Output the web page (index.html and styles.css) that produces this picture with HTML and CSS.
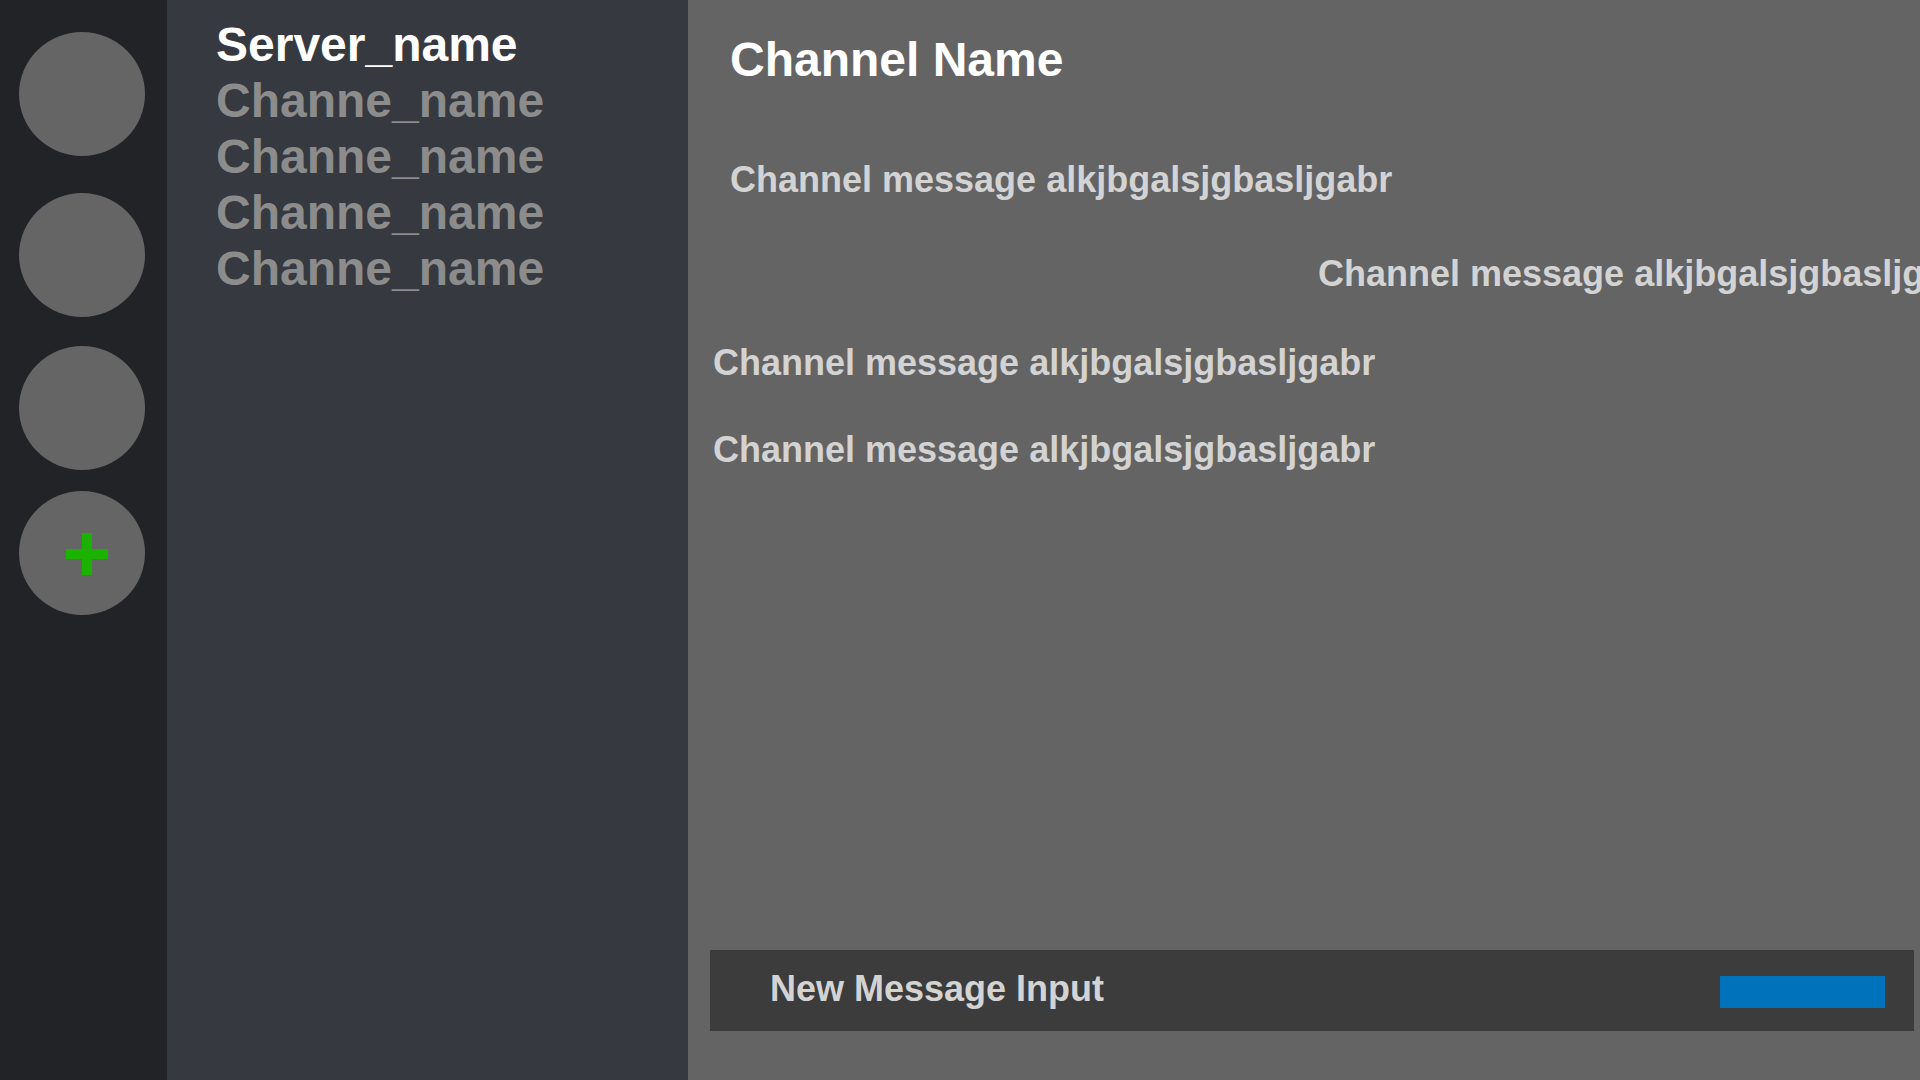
FILE: index.html
```html
<!DOCTYPE html>
<html>
<head>
<meta charset="utf-8">
<title>Chat</title>
<link rel="stylesheet" href="styles.css">
</head>
<body>
<div class="app">
  <nav class="servers">
    <div class="server-icon"></div>
    <div class="server-icon"></div>
    <div class="server-icon"></div>
    <div class="server-icon add">
      <svg class="plus" width="42" height="42" viewBox="0 0 42 42"><rect x="16" y="0" width="10" height="42" fill="#1bb300"/><rect x="0" y="16" width="42" height="10" fill="#1bb300"/></svg>
    </div>
  </nav>
  <aside class="channels">
    <div class="server-name">Server_name</div>
    <div class="channel">Channe_name</div>
    <div class="channel">Channe_name</div>
    <div class="channel">Channe_name</div>
    <div class="channel">Channe_name</div>
  </aside>
  <main class="main">
    <h1 class="channel-title">Channel Name</h1>
    <div class="messages">
      <div class="msg msg-a">Channel message alkjbgalsjgbasljgabr</div>
      <div class="msg msg-b">Channel message alkjbgalsjgbasljgabr</div>
      <div class="msg msg-c">Channel message alkjbgalsjgbasljgabr</div>
      <div class="msg msg-d">Channel message alkjbgalsjgbasljgabr</div>
    </div>
    <div class="composer">
      <span class="composer-text">New Message Input</span>
      <div class="send"></div>
    </div>
  </main>
</div>
</body>
</html>
```
FILE: styles.css
```css
html, body {
  margin: 0;
  padding: 0;
  height: 100%;
}
body {
  font-family: "Liberation Sans", Arial, sans-serif;
  font-weight: bold;
  overflow: hidden;
}
.app {
  display: flex;
  width: 1920px;
  height: 1080px;
}
.servers {
  width: 167px;
  flex: none;
  background: #212326;
  display: flex;
  flex-direction: column;
  padding-left: 19px;
  box-sizing: border-box;
}
.server-icon {
  width: 126px;
  height: 124px;
  border-radius: 50%;
  background: #656565;
  flex: none;
}
.server-icon:nth-child(1) { margin-top: 32px; }
.server-icon:nth-child(2) { margin-top: 37px; }
.server-icon:nth-child(3) { margin-top: 29px; }
.server-icon:nth-child(4) { margin-top: 21px; }
.server-icon.add {
  display: flex;
  align-items: center;
  justify-content: center;
}
.plus {
  display: block;
  margin-left: 10px;
  margin-top: 2px;
}
.channels {
  width: 521px;
  flex: none;
  background: #36393f;
  padding: 17px 0 0 49px;
  box-sizing: border-box;
  font-size: 48px;
  line-height: 56px;
}
.server-name {
  color: #ffffff;
}
.channel {
  color: #8c8c8c;
}
.main {
  flex: 1;
  background: #646464;
  display: flex;
  flex-direction: column;
  overflow: hidden;
  min-width: 0;
}
.channel-title {
  margin: 33px 0 0 42px;
  font-size: 48px;
  line-height: 54px;
  color: #ffffff;
  font-weight: bold;
}
.messages {
  flex: 1;
  display: flex;
  flex-direction: column;
  font-size: 36px;
  line-height: 40px;
  color: #d3d3d3;
  white-space: nowrap;
}
.msg-a { margin: 73px 0 0 42px; }
.msg-b { margin: 54px 0 0 630px; }
.msg-c { margin: 49px 0 0 25px; }
.msg-d { margin: 47px 0 0 25px; }
.composer {
  flex: none;
  height: 81px;
  margin: 0 6px 49px 22px;
  background: #3c3c3c;
  display: flex;
  align-items: center;
  justify-content: space-between;
  padding: 0 29px 0 60px;
  box-sizing: border-box;
}
.composer-text {
  font-size: 36px;
  line-height: 40px;
  color: #d3d3d3;
  margin-top: -4px;
}
.send {
  width: 165px;
  height: 32px;
  background: #0072bb;
  margin-top: 3px;
}
```
